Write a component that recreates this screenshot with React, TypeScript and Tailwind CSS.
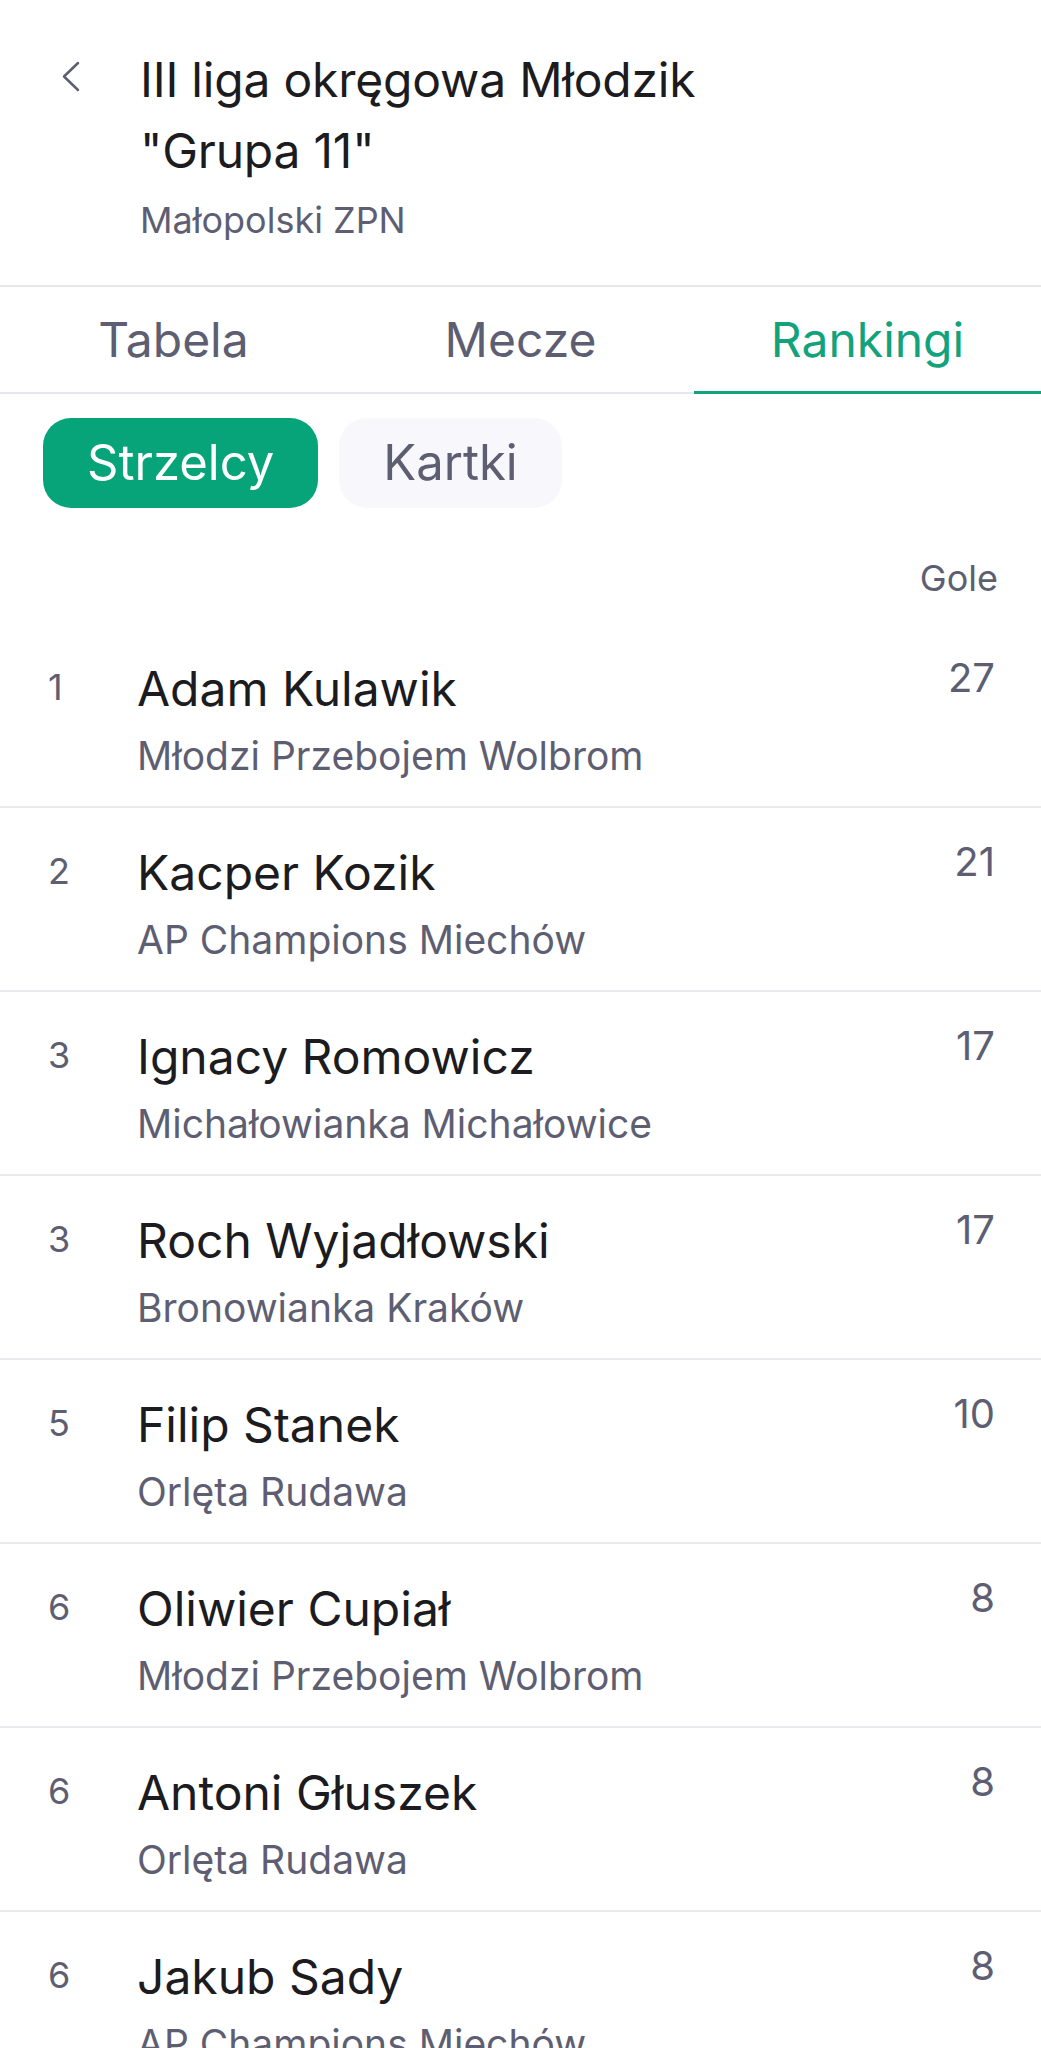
import { useState } from "react";

const scorers = [
  { rank: 1, name: "Adam Kulawik", team: "Młodzi Przebojem Wolbrom", goals: 27 },
  { rank: 2, name: "Kacper Kozik", team: "AP Champions Miechów", goals: 21 },
  { rank: 3, name: "Ignacy Romowicz", team: "Michałowianka Michałowice", goals: 17 },
  { rank: 3, name: "Roch Wyjadłowski", team: "Bronowianka Kraków", goals: 17 },
  { rank: 5, name: "Filip Stanek", team: "Orlęta Rudawa", goals: 10 },
  { rank: 6, name: "Oliwier Cupiał", team: "Młodzi Przebojem Wolbrom", goals: 8 },
  { rank: 6, name: "Antoni Głuszek", team: "Orlęta Rudawa", goals: 8 },
  { rank: 6, name: "Jakub Sady", team: "AP Champions Miechów", goals: 8 },
];

const tabs = ["Tabela", "Mecze", "Rankingi"];

export default function App() {
  const [tab, setTab] = useState("Rankingi");
  const [kind, setKind] = useState("Strzelcy");

  return (
    <div className="h-[2048px] overflow-hidden bg-white text-[#1b1b20]" style={{ fontFamily: "Inter, 'Noto Sans', sans-serif" }}>
      {/* header */}
      <header className="flex pl-[61px] pr-[46px] pt-[44px] pb-[41px]">
        <button className="mt-[17px] h-[31px] w-[20px] shrink-0 text-[#5e5e72]">
          <svg viewBox="0 0 20 31" className="h-[31px] w-[20px]" fill="none" stroke="currentColor" strokeWidth="2.5" strokeLinecap="round" strokeLinejoin="round">
            <path d="M17 2 L3 15.5 L17 29" />
          </svg>
        </button>
        <div className="ml-[59px] w-[660px]">
          <h1 className="text-[48px] leading-[71px] font-normal tracking-[-0.2px]">III liga okręgowa Młodzik "Grupa 11"</h1>
          <p className="mt-[10px] text-[36px] leading-[48px] text-[#5e5e72]">Małopolski ZPN</p>
        </div>
      </header>

      {/* tabs */}
      <nav className="grid grid-cols-3 border-t-2 border-b-2 border-[#e6e6ee]">
        {tabs.map((t) => (
          <button
            key={t}
            onClick={() => setTab(t)}
            className={`relative h-[105px] text-[48px] ${t === tab ? "text-[#12a27c]" : "text-[#5e5e72]"}`}
          >
            {t}
            {t === tab && <span className="absolute inset-x-0 -bottom-[2px] h-[3px] bg-[#12a27c]" />}
          </button>
        ))}
      </nav>

      {/* filter pills */}
      <div className="flex gap-[21px] px-[43px] pt-[24px]">
        {["Strzelcy", "Kartki"].map((k) => (
          <button
            key={k}
            onClick={() => setKind(k)}
            className={`h-[90px] rounded-[28px] px-[44px] text-[49px] ${
              k === kind ? "bg-[#08a479] text-white" : "bg-[#f7f7fc] text-[#5e5e72]"
            }`}
          >
            {k}
          </button>
        ))}
      </div>

      <div className="mt-[48px] flex justify-end pr-[43px] text-[36px] leading-[44px] text-[#5e5e72]">Gole</div>

      <ul className="mt-[24px]">
        {scorers.map((s, i) => (
          <li key={i} className="flex border-b-2 border-[#e9e9ef] pl-[48px] pr-[46px] pt-[36px] pb-[26px]">
            <span className="w-[89px] shrink-0 text-[36px] leading-[54px] text-[#5e5e72]">{s.rank}</span>
            <div className="min-w-0 flex-1">
              <div className="text-[48px] leading-[58px] text-[#1b1b20]">{s.name}</div>
              <div className="mt-[14px] text-[39px] leading-[48px] text-[#5e5e72]">{s.team}</div>
            </div>
            <span className="text-[40px] leading-[36px] text-[#5e5e72]">{s.goals}</span>
          </li>
        ))}
      </ul>
    </div>
  );
}
